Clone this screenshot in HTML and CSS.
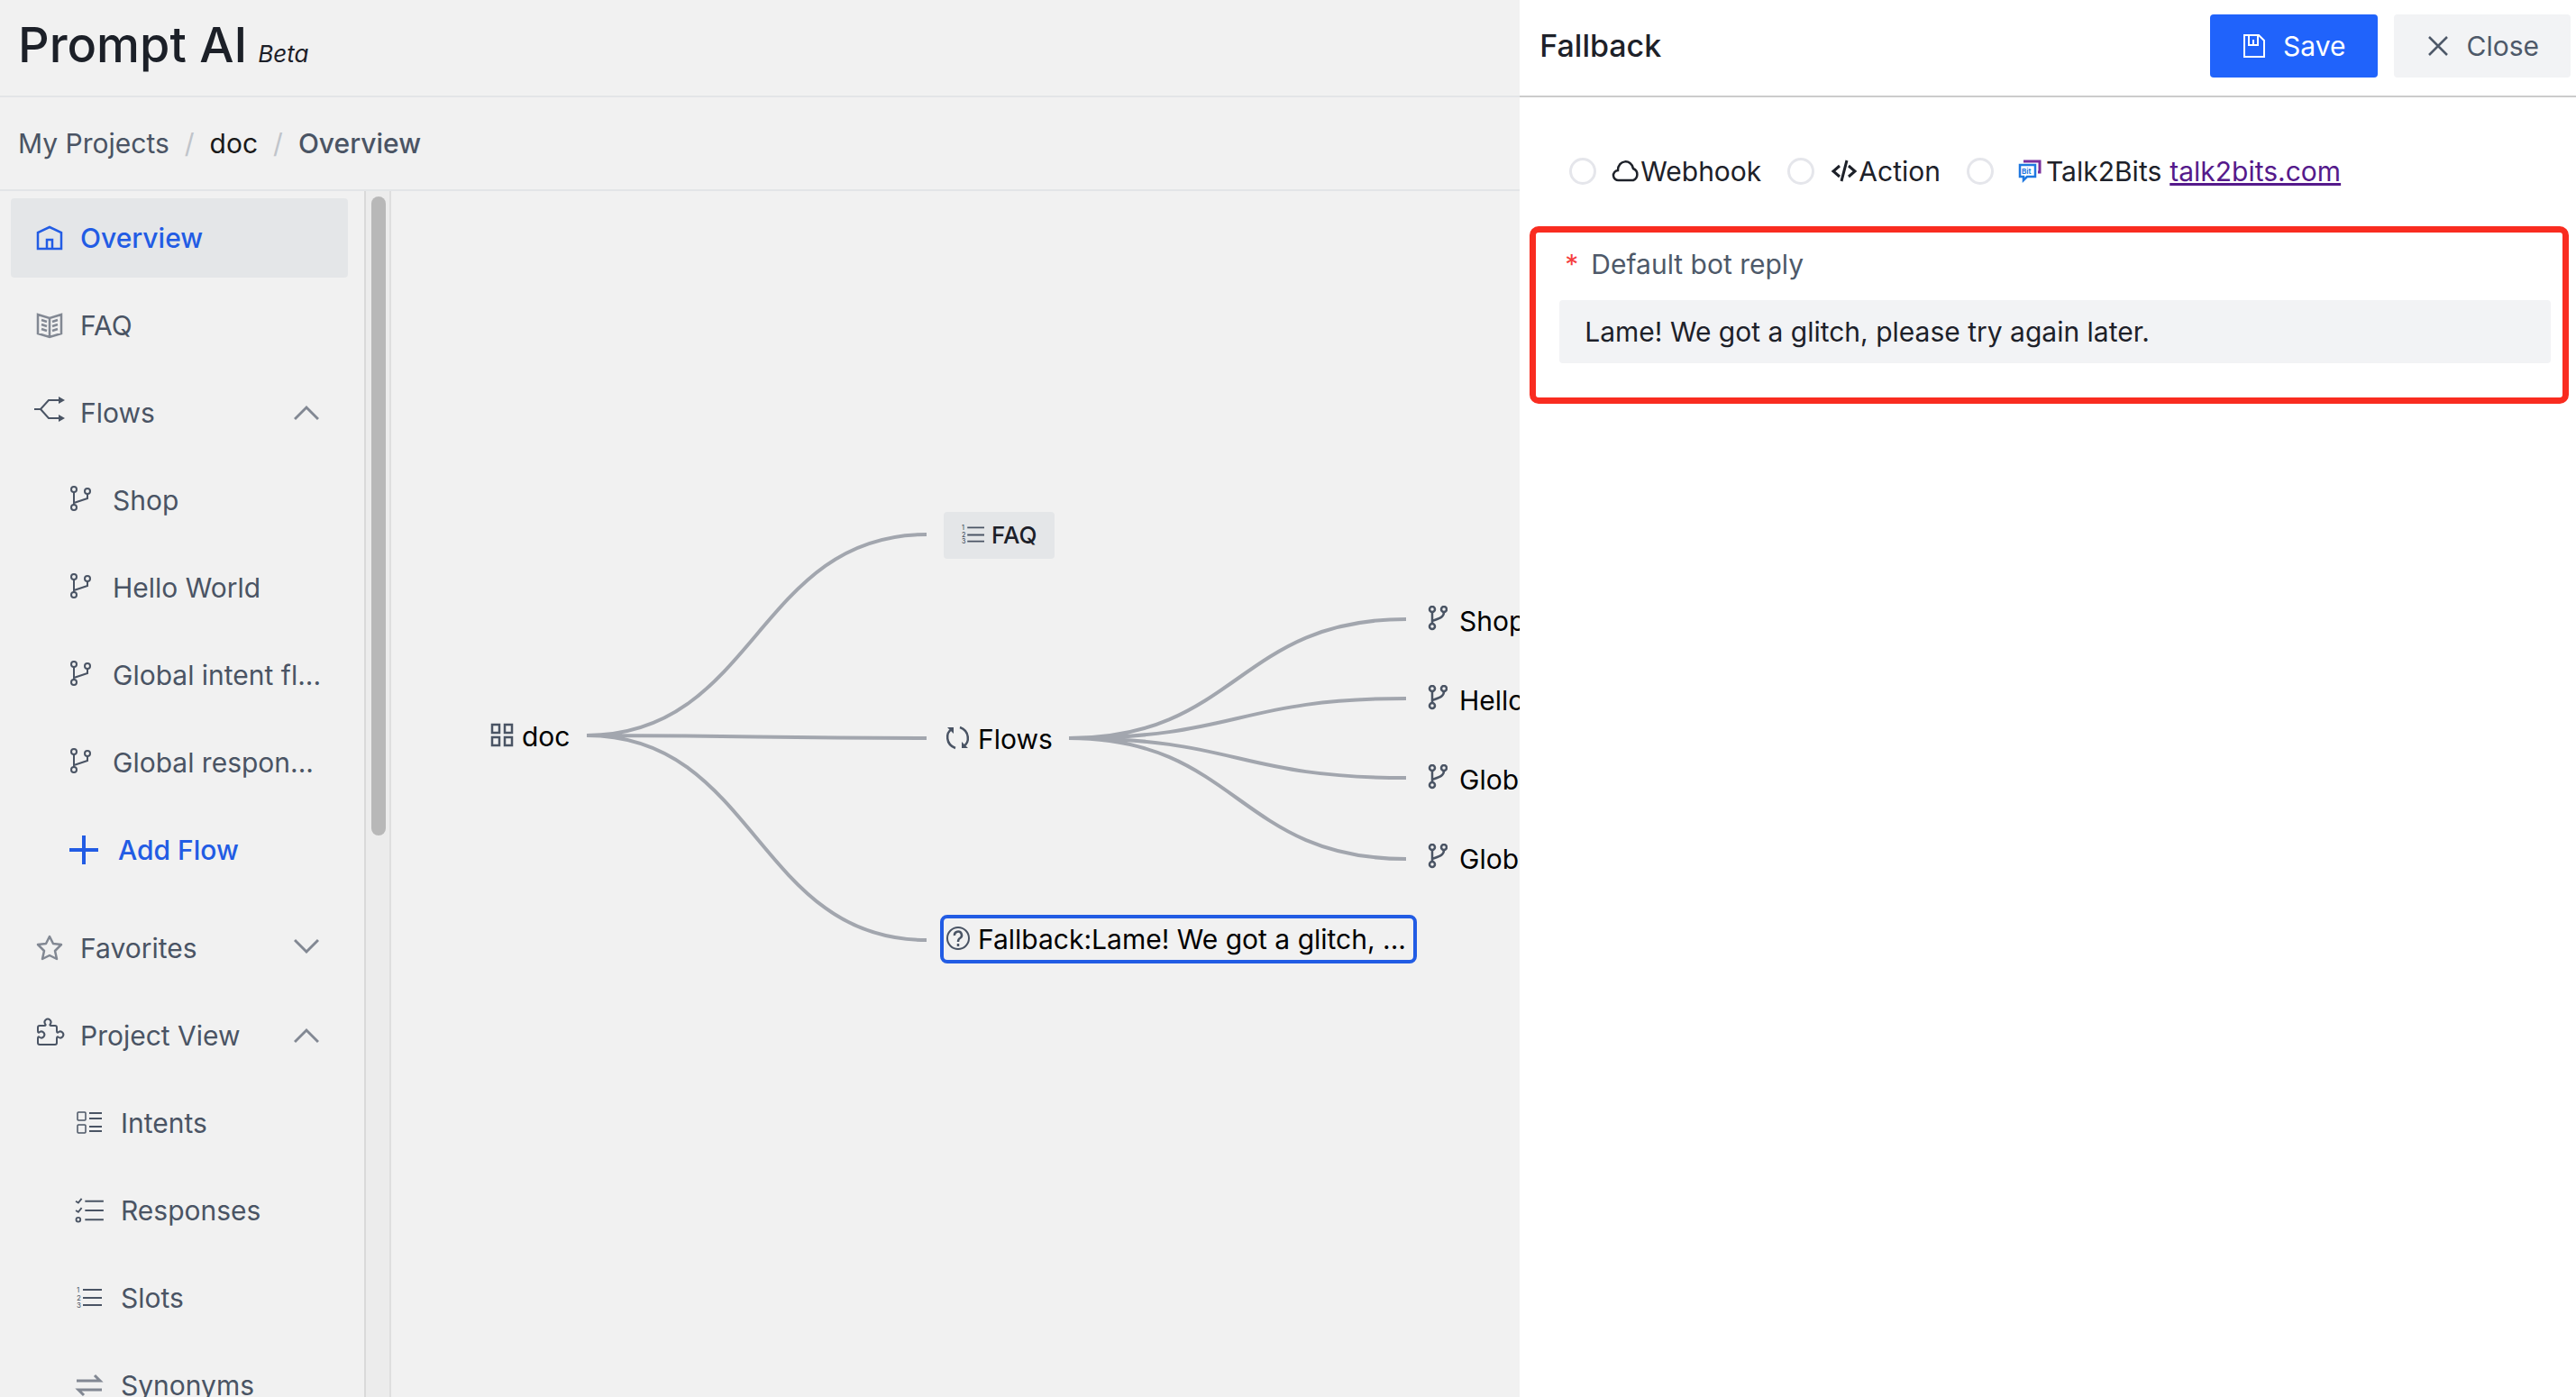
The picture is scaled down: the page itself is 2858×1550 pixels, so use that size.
FILE: index.html
```html
<!DOCTYPE html>
<html lang="en">
<head>
<meta charset="utf-8">
<title>Prompt AI</title>
<link rel="stylesheet" href="styles.css">
</head>
<body>
<svg class="sprite" aria-hidden="true">
  <symbol id="branch" viewBox="0 0 24 28"><g fill="none" stroke="currentColor" stroke-width="2"><circle cx="5" cy="4" r="3"/><circle cx="5" cy="24" r="3"/><circle cx="20" cy="6" r="3"/><path d="M5 7v14M20 9v5l-15 5"/></g></symbol>
  <symbol id="fork" viewBox="0 0 22 28"><g fill="none" stroke="currentColor" stroke-width="2.500"><circle cx="5" cy="4" r="3"/><circle cx="5" cy="23" r="3"/><circle cx="18" cy="4" r="3"/><path d="M5 7v13M18 7c0 6-5 7-13 10"/></g></symbol>
  <symbol id="up" viewBox="0 0 28 28"><path d="M1 21 14 8l13 13" fill="none" stroke="currentColor" stroke-width="3"/></symbol>
  <symbol id="down" viewBox="0 0 28 28"><path d="M1 5l13 13L27 5" fill="none" stroke="currentColor" stroke-width="3"/></symbol>
  <symbol id="numbered" viewBox="0 0 28 28"><path d="M7 5h21M7 14h21M7 22h21" stroke="currentColor" stroke-width="2"/><g fill="currentColor" font-family="Inter, sans-serif" font-size="8"><text x="0" y="8">1</text><text x="0" y="17">2</text><text x="0" y="25">3</text></g></symbol>
</svg>
<div class="app">
  <div class="workspace">
    <header class="brand"><h1>Prompt AI</h1><em>Beta</em></header>
    <nav class="crumbs" aria-label="Breadcrumb">
      <a href="#">My Projects</a><span class="slash">/</span><a class="project" href="#">doc</a><span class="slash">/</span><span class="current">Overview</span>
    </nav>
    <div class="body">
      <nav class="sidebar" aria-label="Project">
        <a class="item active" href="#"><svg class="icon" viewBox="0 0 28 28"><g fill="none" stroke="currentColor" stroke-width="2.500"><path d="M1 26V8l13-6 13 6v18zM11 26V16h6v10"/></g></svg>Overview</a>
        <a class="item" href="#"><svg class="icon muted" viewBox="0 0 28 28"><path d="M1 2l13 4 13-4v21l-13 4-13-4zM14 6v20M5 8l6 2M5 13l6 2M5 18l6 2M23 8l-6 2M23 13l-6 2M23 18l-6 2" fill="none" stroke="currentColor" stroke-width="2.500"/></svg>FAQ</a>
        <a class="item" href="#"><svg class="icon wide raised" viewBox="0 0 34 28"><path d="M0 14h7l9-10h12M7 14l9 10h12" fill="none" stroke="currentColor" stroke-width="2"/><path d="M27 0l7 4-7 4zM27 20l7 4-7 4z" fill="currentColor"/></svg>Flows<svg class="caret"><use href="#up"/></svg></a>
        <a class="item sub" href="#"><svg class="twig"><use href="#branch"/></svg><span>Shop</span></a>
        <a class="item sub" href="#"><svg class="twig"><use href="#branch"/></svg><span>Hello World</span></a>
        <a class="item sub" href="#"><svg class="twig"><use href="#branch"/></svg><span>Global intent fl...</span></a>
        <a class="item sub" href="#"><svg class="twig"><use href="#branch"/></svg><span>Global respon...</span></a>
        <button class="item add" type="button"><svg class="plus" viewBox="0 0 32 32"><path d="M16 0v32M0 16h32" stroke="currentColor" stroke-width="4"/></svg>Add Flow</button>
        <a class="item apart" href="#"><svg class="icon muted" viewBox="0 0 28 28"><path d="M14 1l4 8 9 1-7 7 2 9-8-4-8 4 2-9-7-7 9-1z" fill="none" stroke="currentColor" stroke-width="2.500" stroke-linejoin="round"/></svg>Favorites<svg class="caret"><use href="#down"/></svg></a>
        <a class="item" href="#"><svg class="icon puzzle raised" viewBox="0 0 30 30"><path d="M3 8h5c2 0 2-1 1-2a3.500 3.500 0 1 1 6 0c-1 1-1 2 1 2h4q2 0 2 2v4c0 2 1 2 2 1a3.500 3.500 0 1 1 0 6c-1-1-2-1-2 1v5q0 2-2 2H3q-2 0-2-2v-5c0-2 1-2 2-1a3.500 3.500 0 1 0 0-6c-1 1-2 1-2-1v-4q0-2 2-2z" fill="none" stroke="currentColor" stroke-width="2"/></svg>Project View<svg class="caret"><use href="#up"/></svg></a>
        <a class="item view" href="#"><svg class="icon" viewBox="0 0 28 28"><g fill="none" stroke="currentColor" stroke-width="1.500"><rect x="1" y="2" width="9" height="9" rx="1"/><rect x="1" y="16" width="9" height="9" rx="1"/><path d="M14 3h14M14 9h14M14 18h14M14 23h14" stroke-width="2"/></g></svg>Intents</a>
        <a class="item view" href="#"><svg class="icon wide" viewBox="0 0 34 30"><g fill="none" stroke="currentColor" stroke-width="2"><path d="M12 4h22M12 15h22M12 26h22M1 4l3 2 4-5M1 15l3 2 4-5"/><circle cx="4" cy="26" r="2.500"/></g></svg>Responses</a>
        <a class="item view" href="#"><svg class="icon"><use href="#numbered"/></svg>Slots</a>
        <a class="item view" href="#"><svg class="icon muted" viewBox="0 0 28 28"><path d="M0 9h26l-6-6M28 19H2l6 6" fill="none" stroke="currentColor" stroke-width="3"/></svg>Synonyms</a>
      </nav>
      <div class="track"><div class="thumb"></div></div>
      <main class="canvas">
        <svg class="links" aria-hidden="true"><g fill="none" stroke="#a2a6ae" stroke-width="4">
          <path d="M217 604C405 604 405 381 594 381M217 604C405 604 405 607 594 607M217 604C405 604 405 831 594 831"/>
          <path d="M752 607C939 607 939 475 1126 475M752 607C939 607 939 563 1126 563M752 607C939 607 939 651 1126 651M752 607C939 607 939 741 1126 741"/>
        </g></svg>
        <div class="node root"><svg viewBox="0 0 28 28"><g fill="none" stroke="currentColor" stroke-width="2.500"><rect x="3" y="2" width="8" height="9"/><rect x="17" y="2" width="8" height="9"/><rect x="3" y="16" width="8" height="9"/><rect x="17" y="16" width="8" height="9"/></g></svg>doc</div>
        <button class="node faq" type="button"><svg><use href="#numbered"/></svg>FAQ</button>
        <div class="node flows"><svg viewBox="0 0 28 28"><g fill="none" stroke="currentColor" stroke-width="2.500"><path d="M11 25C0 21 0 8 7 4M16 2c11 4 11 17 4 21"/></g><path d="M2 2h7v7zM25 25h-7v-7z" fill="currentColor"/></svg>Flows</div>
        <div class="node fallback"><svg viewBox="0 0 28 28"><g fill="none" stroke="currentColor" stroke-width="2"><circle cx="14" cy="14" r="12"/><path d="M10 11a4 4 0 1 1 6 3q-2 1-2 4M14 20v3" stroke-width="2.500"/></g></svg>Fallback:Lame! We got a glitch, ...</div>
        <div class="node leaf one"><svg><use href="#fork"/></svg>Shop</div>
        <div class="node leaf two"><svg><use href="#fork"/></svg>Hello World</div>
        <div class="node leaf three"><svg><use href="#fork"/></svg>Global intent flow</div>
        <div class="node leaf four"><svg><use href="#fork"/></svg>Global response</div>
      </main>
    </div>
  </div>
  <aside class="drawer">
    <header class="drawer-head">
      <h2>Fallback</h2>
      <button class="save" type="button"><svg viewBox="0 0 28 28"><path d="M3 2h16l6 6v18H3zM8 2v11h10V2M13 7v6" fill="none" stroke="currentColor" stroke-width="2"/></svg>Save</button>
      <button class="close" type="button"><svg viewBox="0 0 28 28"><path d="M4 4l20 20M24 4L4 24" stroke="currentColor" stroke-width="2.500"/></svg>Close</button>
    </header>
    <form>
      <div class="kinds">
        <label><input type="radio" name="kind"><svg viewBox="0 0 28 28"><path d="M6 24a5 5 0 0 1-1-11C5 1 20 0 22 11a7 7 0 0 1 0 13z" fill="none" stroke="currentColor" stroke-width="2.500"/></svg>Webhook</label>
        <label><input type="radio" name="kind"><svg viewBox="0 0 28 28"><path d="M9 8l-7 6 7 6M19 8l7 6-7 6M17 2l-6 23" fill="none" stroke="currentColor" stroke-width="3"/></svg>Action</label>
        <label class="talk"><input type="radio" name="kind"><svg viewBox="0 0 28 28"><path d="M6 3h18v12h-2" fill="none" stroke="#7b2f9b" stroke-width="3"/><path d="M2 7h17v13h-9l-4 4v-4H2z" fill="none" stroke="#1f78e0" stroke-width="2.500"/><text x="4" y="17" font-family="Inter, sans-serif" font-size="8" font-weight="700" fill="#1f78e0">Bit</text></svg>Talk2Bits</label>
        <a href="#">talk2bits.com</a>
      </div>
      <div class="field">
        <label for="reply"><span class="star">*</span>Default bot reply</label>
        <input id="reply" type="text" value="Lame! We got a glitch, please try again later.">
      </div>
    </form>
  </aside>
</div>
</body>
</html>
```
FILE: styles.css
```css
* { box-sizing: border-box; }
body { margin: 0; background: #f1f1f1; color: #4a5464; font: 30px/40px Inter, sans-serif; }
h1, h2 { margin: 0; font-weight: 500; }
a { color: inherit; text-decoration: none; }
button, input { margin: 0; border: 0; font: inherit; color: inherit; }
svg { flex: none; overflow: visible; }
.sprite { position: absolute; width: 0; height: 0; }

.app { display: flex; height: 100vh; overflow: hidden; }
.workspace { flex: 1; min-width: 0; display: flex; flex-direction: column; overflow: hidden; }

.brand { display: flex; align-items: baseline; gap: 12px; height: 108px; padding: 18px 20px; border-bottom: 2px solid #e3e5e7; color: #1c2028; }
.brand h1 { font-size: 54px; line-height: 64px; }
.brand em { font-size: 26px; }
.crumbs { display: flex; align-items: center; gap: 17px; height: 104px; padding: 0 20px; border-bottom: 2px solid #e3e5e7; }
.slash { color: #c0c4ca; }
.project { color: #1a1a1a; }
.current { font-weight: 500; }

.body { flex: 1; display: flex; min-height: 0; }
.sidebar { flex: none; width: 406px; display: flex; flex-direction: column; gap: 9px; padding: 8px 18px 0 12px; border-right: 2px solid #d9d9d9; overflow: hidden; }
.item { flex: none; display: flex; align-items: center; gap: 20px; height: 88px; padding: 0 32px 0 29px; border-radius: 4px; background: none; white-space: nowrap; }
.item.active { background: #e4e6e8; color: #225ce4; font-weight: 500; }
.icon { width: 28px; height: 28px; }
.icon.wide { width: 34px; margin: 0 -3px; }
.icon.puzzle { width: 30px; height: 30px; margin-right: -2px; }
.icon.raised { margin-bottom: 8px; }
.muted, .caret { color: #828893; }
.caret { width: 28px; height: 28px; margin-left: auto; }
.item.sub { padding-left: 65px; gap: 24px; }
.twig { width: 24px; height: 28px; margin-bottom: 4px; }
.item.add { padding-left: 65px; gap: 22px; color: #225ce4; font-weight: 500; }
.plus { width: 32px; height: 32px; }
.item.apart { margin-top: 12px; }
.item.view { padding-left: 73px; gap: 21px; }

.track { flex: none; width: 28px; padding: 6px; border-right: 2px solid #dedede; background: #ececec; }
.thumb { width: 16px; height: 53.5%; border-radius: 8px; background: #b8b8b8; }

.canvas { position: relative; flex: 1; min-width: 0; overflow: hidden; color: #000; }
.links { position: absolute; left: 0; top: 0; width: 100%; height: 100%; }
.node { position: absolute; display: flex; align-items: center; gap: 8px; padding: 0; height: 52px; white-space: nowrap; background: none; }
.node svg { width: 28px; height: 28px; margin-bottom: 2px; color: #4a5464; }
.root { left: 109px; top: 579px; }
.faq { left: 613px; top: 356px; padding: 0 20px; border-radius: 4px; background: #e4e6e8; color: #1c2028; font-size: 26px; font-weight: 500; }
.faq svg { width: 25px; height: 25px; }
.flows { left: 615px; top: 582px; }
.fallback { left: 609px; top: 803px; height: 54px; padding: 0 8px 0 2px; border: 4px solid #225ce4; border-radius: 8px; }
.leaf { left: 1150px; gap: 13px; }
.leaf svg { width: 22px; margin-bottom: 6px; }
.leaf.one { top: 451px; }
.leaf.two { top: 539px; }
.leaf.three { top: 627px; }
.leaf.four { top: 715px; }

.drawer { flex: none; width: 41%; background: #fff; }
.drawer-head { display: flex; align-items: center; gap: 18px; height: 108px; padding: 0 6px 4px 22px; border-bottom: 2px solid #ccc; color: #1d2129; }
.drawer-head h2 { flex: 1; font-size: 34px; }
.drawer-head button { display: flex; align-items: center; gap: 18px; height: 70px; padding: 0 35px; border-radius: 4px; }
.drawer-head svg { width: 28px; height: 28px; }
.save { background: #2063fb; color: #fff; }
.close { background: #f2f3f5; color: #4e5969; }

.kinds { display: flex; align-items: center; height: 143px; padding: 20px 55px 0; color: #1d2129; }
.kinds label { display: flex; align-items: center; margin-right: 29px; }
.kinds input { appearance: none; width: 30px; height: 30px; margin-right: 19px; border: 3px solid #e5e6eb; border-radius: 50%; }
.kinds svg { width: 28px; height: 28px; margin-right: 2px; }
.kinds .talk { margin-right: 9px; }
.talk svg { margin: 0 3px 0 8px; }
.kinds a { color: #551a8b; text-decoration: underline; }
.field { display: flex; flex-direction: column; gap: 20px; margin: 0 8px 0 11px; padding: 15px 13px 38px 26px; border: 7px solid #f92c20; border-radius: 10px; }
.field label { padding-left: 6px; color: #4e5969; }
.star { margin-right: 14px; color: #f53f3f; }
.field input { width: 100%; height: 70px; padding: 0 28px; border-radius: 4px; background: #f2f3f5; color: #1d2129; }
```
